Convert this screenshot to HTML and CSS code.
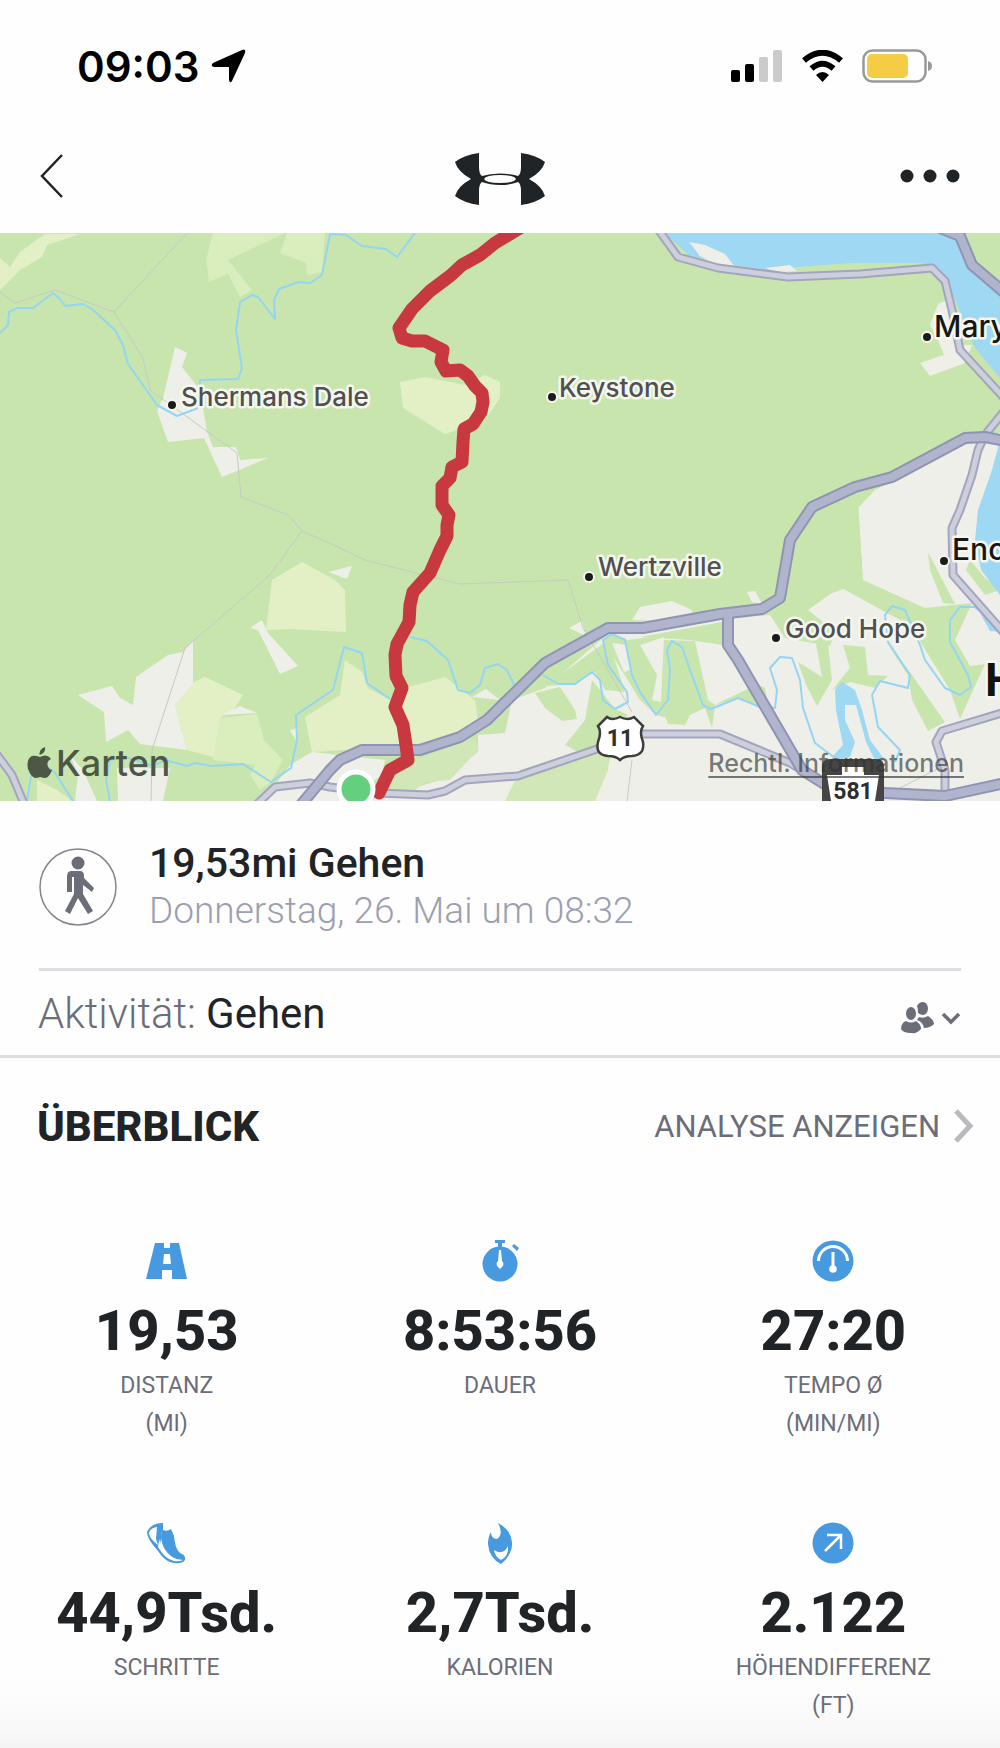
FILE: index.html
```html
<!DOCTYPE html>
<html lang="de">
<head>
  <meta charset="UTF-8" />
  <meta name="viewport" content="width=device-width, initial-scale=1.0" />
  <title>19,53mi Gehen</title>
  <link rel="stylesheet" href="styles.css">
</head>
<body>
  <div class="status-bar">
    <div class="status-left">
      <span class="time">09:03</span>
      <svg width="36" height="34" viewBox="0 0 36 34" fill="#000"><path d="M31 1Q35 -1 34 4L21 32Q19 35 18 31V18H3Q-1 17 2 14Z"/></svg>
    </div>
    <div class="status-right">
      <svg width="52" height="34" viewBox="0 0 52 34"><rect y="21" width="9" height="12" rx="2"/><rect x="14" y="15" width="9" height="18" rx="2"/><rect x="28" y="8" width="9" height="25" rx="2" fill="#cbcbcb"/><rect x="42" y="1" width="9" height="32" rx="2" fill="#cbcbcb"/></svg>
      <svg width="43" height="32" viewBox="0 0 43 32"><path d="M3 10.500Q21.500-5 40 10.500M10.500 18.500Q21.500 9 32.500 18.500" fill="none" stroke="#000" stroke-width="6"/><path d="M15 25Q21.500 19 28 25L21.500 32Z"/></svg>
      <svg width="70" height="34" viewBox="0 0 70 34"><rect x="1.500" y="1.500" width="62" height="31" rx="9" fill="none" stroke="#999" stroke-width="2.500"/><rect x="5" y="5" width="41" height="24" rx="5" fill="#f5cc45"/><path d="M66 12Q70 13 70 17T66 22Z" fill="#999"/></svg>
    </div>
  </div>

  <header class="nav">
    <button class="icon-button" aria-label="Zurück">
      <svg width="24" height="44" viewBox="0 0 24 44" fill="none" stroke="#202427" stroke-width="2.500"><path d="M22 1L2 22L22 43"/></svg>
    </button>
    <svg class="logo" width="92" height="52" viewBox="0 0 92 52" fill="#202427">
      <path id="ua-half" d="M25 0Q10 2 1 9Q4 19 17 26Q4 33 1 43Q10 50 25 52V38Q25 31 28 29Q36 32 46 32V30Q32 30 30 26Q32 22 46 22V20.500Q36 20.500 28 23Q25 21 25 14Z"/>
      <use href="#ua-half" transform="translate(92 0) scale(-1 1)"/>
    </svg>
    <button class="icon-button" aria-label="Mehr">
      <svg width="60" height="14" viewBox="0 0 60 14" fill="#202427"><circle cx="7" cy="7" r="6.500"/><circle cx="30" cy="7" r="6.500"/><circle cx="53" cy="7" r="6.500"/></svg>
    </button>
  </header>

  <section class="map">
    <svg class="map-canvas" viewBox="0 233 1000 568" preserveAspectRatio="xMidYMid slice">
      <rect y="233" width="1000" height="568" fill="#c8e5ae"/>

      <!-- fields -->
      <g fill="#e3f0c6">
        <path d="M0 258L10 267L20 252L45 234H80L47 245L42 257L20 270L0 290Z"/>
        <path d="M400 382L425 377L465 385L485 375L500 382V398L485 420L445 434L403 408Z"/>
        <path d="M302 562L272 580L266 630L290 629L346 632L345 590L335 580Z"/>
        <path d="M205 677L243 695L235 708L220 718L225 740L213 757L187 750L175 705L192 683Z"/>
        <path d="M37 780L57 790L72 801H37Z"/>
        <path d="M305 717L340 695L345 660L362 672L368 688L390 700L405 688L445 677L475 700L478 720L455 740L375 748L312 752Z"/>
      </g>
      <g fill="#d9edbd">
        <path d="M213 233H285L228 260L252 290L240 297L228 274L209 282L206 260Z"/>
        <path d="M287 233H325L322 272L307 275L306 263L280 253Z"/>
        <path d="M220 718L257 714L264 740L283 760L271 782L260 790L250 775L255 765L213 760Z"/>
      </g>

      <!-- towns -->
      <g fill="#efefea">
        <path d="M175 347L187 353L182 367L200 390L207 432L213 447H236L240 460L268 458L222 477L204 438L168 442L157 411L163 398Z"/>
        <path d="M78 695L112 686L120 698L133 705L136 677L168 655L183 652L193 641V683L175 705L187 750L140 744L128 730L106 742L104 712Z"/>
        <path d="M250 628L262 620L268 633L298 666L280 674L258 630Z"/>
        <path d="M328 572L352 566L347 579Z"/>
        <path d="M222 715L240 706L257 713Z"/>
        <path d="M70 755L83 770L97 801H75L78 775Z"/>
        <path d="M117 768H170L163 801H118Z"/>
        <path d="M290 730L298 728L297 742Z"/>
        <path d="M275 785L290 765L312 752L385 760L382 775L345 801H260Z"/>
        <path d="M569 628L582 621L586 636Z"/>
        <path d="M632 620L640 607L672 601L692 610V622Z"/>
        <path d="M747 592L755 591L762 604L752 602Z"/>
        <path d="M472 697L486 689L500 700Z"/>
        <path d="M478 752V735L505 733L512 700L545 688L608 634L643 633L720 620L770 615L863 582L858 508L875 490L935 460L965 443L1000 433V801H320L382 798L440 780Z"/>
        <path d="M938 304L948 300L955 310L960 345L972 345L965 363L930 376L920 363L944 355L938 340L930 325Z"/>
      </g>

      <!-- woods inside the towns -->
      <g fill="#c8e5ae">
        <path d="M780 600L800 500L858 500L863 580L925 608L972 603L955 640L970 666L985 664L960 719L950 690L910 625L885 612L840 587L808 610L835 632L830 646L785 638L770 615Z"/>
        <path d="M928 552L955 604L943 603L930 570Z"/>
        <path d="M798 662L822 677L816 644L828 644L832 680L817 706L806 685Z"/>
        <path d="M843 645L865 647L868 675L888 676L875 688L850 682L832 690L850 668Z"/>
        <path d="M886 642L912 675L945 722L928 731L912 700L908 675Z"/>
        <path d="M662 640L695 641L708 700L715 705L712 728L705 708L690 715L685 725L668 724L660 700Z"/>
        <path d="M640 637L722 622V645L690 640Z"/>
        <path d="M712 706L752 687L760 708L738 698Z"/>
        <path d="M748 680L765 688L768 706Z"/>
        <path d="M535 693L560 687L575 710L577 719L562 721L545 708Z"/>
        <path d="M592 680L600 690L615 709L628 715L615 730L608 768L565 745L585 720Z"/>
        <path d="M603 640L613 634L628 640L660 636L664 640L661 700L675 720L656 715L640 700Z"/>
        <path d="M545 686L608 640L625 692L605 690L595 672L575 684Z"/>
        <path d="M970 560L985 578L1000 590L985 595L966 570Z"/>
      </g>
      <g fill="#efefea">
        <path d="M612 643L627 645L630 670L624 672Z"/>
        <path d="M640 645L664 637L661 702L652 700L657 675Z"/>
      </g>
      <g fill="#d1e7b8">
        <path d="M382 772L473 738L479 749L450 780L425 782L415 790L390 797Z"/>
        <path d="M505 801L520 770H608L595 801Z"/>
        <path d="M520 770L560 757L608 745V770Z"/>
      </g>

      <!-- water -->
      <g fill="#9fd8f2">
        <path d="M664 233L690 256L760 270L850 263L920 263L935 266L945 277L955 300L965 325L975 348L1000 378V290L972 267L958 240L945 233Z"/>
        <path d="M1000 440L992 470L978 510L975 540L981 570L1000 595Z"/>
        <path d="M980 613L992 617L1000 632L990 631Z"/>
        <path d="M835 690L842 682L855 690L862 710L870 740L885 760H875L866 742L856 705L845 705V720L855 742L850 757L838 760L832 757L843 745L836 710Z"/>
      </g>
      <path d="M689 242L705 245L725 254L735 267L715 264L700 256Z" fill="#efefea"/>
      <path d="M765 268L790 265L797 271L780 272Z" fill="#efefea"/>

      <!-- streams -->
      <g class="stream">
        <path d="M0 333L8 325L9 312L17 308H33L53 293L60 299L65 306L83 304L92 309L115 330L123 345L128 364L157 405L177 416L198 408"/>
        <path d="M200 390V380L238 379L242 368L236 330L240 302L252 295L258 297L275 319L274 300L279 289L299 282L310 283L322 275L330 234L346 235L362 246L386 249L397 257L415 233"/>
        <path d="M27 801L32 770L45 765L55 773L73 801M110 801L106 780L110 760L125 757L153 766L165 760L187 766L195 763L212 766L243 764L271 782L291 768L297 740L296 715L333 690L344 647L362 653L367 683L390 699"/>
        <path d="M410 637L427 641L448 660L458 690L470 693L480 685L485 668L498 664L507 670L515 687M543 675L558 684H575L592 672L600 680L603 700L615 709L628 702L627 692L608 665L603 640L612 634L625 640L632 675L640 692L656 715L668 700L670 670L667 650L672 641L682 647L690 670L703 705L711 709L738 698L760 707L775 708L777 690L770 668L780 657L792 658L800 680L803 708L815 743L835 758"/>
        <path d="M895 762L900 750L878 727L872 695L880 681L908 688L910 675L888 642L885 615L892 606L905 610L920 645L925 660L945 688L960 695L971 687L968 675L950 642V620L960 607H975L990 620"/>
      </g>

      <!-- small roads -->
      <g class="lane">
        <path d="M0 292L15 303L55 290L114 312L187 233M114 312L143 358L150 390L237 453L241 497L288 515L302 531L270 575L185 648L152 750L151 801"/>
        <path d="M302 531L340 548L365 560L460 584L568 580L583 628L605 665L632 712M632 760L627 801M900 788L945 765"/>
      </g>

      <!-- roads -->
      <g class="road">
        <g id="roads">
          <path d="M655 225L678 257L718 268L788 277L860 274L932 268L945 281L952 310L960 350L1005 399"/>
          <path d="M1005 410L985 435L978 450L972 475L960 510L952 528L953 575L1005 634"/>
          <path d="M255 806L275 787L310 783L330 787L378 793L428 795L445 791L465 780L518 776L600 748L640 734H720L790 763L805 772M-5 752L12 775L25 806"/>
          <path d="M1005 712L942 731L936 742L945 770V796"/>
        </g>
      </g>
      <use href="#roads" class="road-fill"/>
      <g class="highway">
        <g id="highways">
          <path d="M940 228L960 236L972 265L1005 293"/>
          <path d="M300 806L330 770L340 760L362 750H420L460 737L487 720L545 663L608 628H643L720 614L762 609L780 598L790 540L812 507L855 487L892 477L965 438L985 437L1005 441"/>
          <path d="M728 614V645L738 660L802 770L826 785L885 793L945 796L1005 783"/>
        </g>
      </g>
      <use href="#highways" class="highway-fill"/>

      <!-- walked route -->
      <path class="route" d="M520 228L495 243L480 255L462 265L450 276L430 291L412 309L399 328L402 338L412 341H425L443 350L441 362L446 371L460 370L468 376L475 386L482 393L483 402L481 412L473 424L464 429L463 442L462 462L452 467L450 478L442 486V505L449 515L447 525V536L440 550L430 573L413 592L410 605L409 622L397 644L395 655L396 676L402 688L395 707L403 725L406 745L408 760L390 770L379 793"/>
      <circle cx="356" cy="789" r="19.500" fill="#fff"/>
      <circle cx="356" cy="789" r="14.500" fill="#64cf7c"/>

      <!-- road shields -->
      <path d="M607 717Q612 721 620 717Q628 721 634 717L643 726Q639 732 643 742Q645 755 632 756Q624 756 620 760Q616 756 608 756Q595 755 598 742Q602 732 598 726Z" fill="#fff" stroke="#3d3d3d" stroke-width="2.500"/>
      <text class="shield" x="620" y="746">11</text>
      <path d="M822 801V767Q822 759 830 759H876Q884 759 884 767V801Z" fill="#454545"/>
      <path d="M827 775H842V767H864V775H879L875 801H831Z" fill="#fff"/>
      <text class="shield" x="853" y="799">581</text>

      <!-- places -->
      <g fill="#1b1b1b" stroke="#f5f7ee" stroke-width="2">
        <circle cx="172" cy="405" r="5"/><circle cx="552" cy="397" r="5"/><circle cx="927" cy="337" r="5"/><circle cx="589" cy="577" r="5"/><circle cx="776" cy="638" r="5"/><circle cx="944" cy="561" r="5"/>
      </g>
      <g class="place">
        <text x="181" y="406">Shermans Dale</text>
        <text x="559" y="397">Keystone</text>
        <text x="598" y="576">Wertzville</text>
        <text x="785" y="638">Good Hope</text>
        <text class="town" x="934" y="337">Marysville</text>
        <text class="town" x="952" y="560">Enola</text>
        <text class="city" x="985" y="696">Harrisburg</text>
      </g>
    </svg>
    <div class="map-footer">
      <span class="map-brand">
        <svg width="26" height="32" viewBox="0 0 26 32" fill="#4c5745"><path d="M18 0Q19 6 12.500 8Q12 2 18 0ZM13 10Q20 6 24 12Q20 14 20.500 18Q21 22 25 23Q22 31 18 31Q16 31 13.500 30Q10 31 8 31Q4 30 1 22Q-1 12 5 9Q8 8 13 10Z"/></svg>
        Karten
      </span>
      <a class="legal" href="#">Rechtl. Informationen</a>
    </div>
  </section>

  <main>
    <section class="summary">
      <svg class="walk" width="78" height="78" viewBox="0 0 78 78" fill="#6b6d78">
        <circle cx="39" cy="39" r="38" fill="none" stroke="#85868d" stroke-width="1.500"/>
        <circle cx="39" cy="15" r="6.500"/>
        <path d="M32 23H41Q45 23 45 28V30L55 40L53 44L44 37V46L54 63L49 66L39 50L31 66L26 63L35 46V29H33V44H28V29Q28 23 32 23Z"/>
      </svg>
      <div>
        <h1>19,53mi Gehen</h1>
        <p class="date">Donnerstag, 26. Mai um 08:32</p>
      </div>
    </section>

    <section class="activity">
      <p>Aktivität: <span>Gehen</span></p>
      <button class="icon-button" aria-label="Sichtbarkeit">
        <svg width="60" height="32" viewBox="0 0 60 32" fill="#6b6d78"><path d="M11 5a5 6.500 0 0 1 0 13a5 6.500 0 0 1 0-13ZM23 0a5 6.500 0 0 1 0 13Q21 13 18 11Q18 6 17 4Q19 0 23 0ZM6 19Q11 22 16 19Q21 22 21 27Q17 32 11 31Q3 31 1 27Q1 21 6 19ZM19 15Q23 17 28 14Q34 18 34 22Q30 26 24 26Q23 20 17 18Z"/><path d="M43 12L51 20L59 12" fill="none" stroke="#6b6d78" stroke-width="3.500"/></svg>
      </button>
    </section>

    <section class="overview">
      <div class="overview-head">
        <h2>ÜBERBLICK</h2>
        <a href="#">ANALYSE ANZEIGEN
          <svg width="20" height="34" viewBox="0 0 20 34" fill="none" stroke="#b9babd" stroke-width="5"><path d="M2 2L16 17L2 32"/></svg>
        </a>
      </div>

      <div class="stats">
        <div class="stat">
          <svg width="42" height="42" viewBox="0 0 42 42"><path fill-rule="evenodd" d="M9 3H18V8H24V3H33L41 39H26V30H16V39H0ZM18 14L17 24H25L24 14Z"/></svg>
          <strong>19,53</strong>
          <span>DISTANZ<br>(MI)</span>
        </div>
        <div class="stat">
          <svg width="42" height="42" viewBox="0 0 42 42"><path d="M16 0H26V3H23V8H19V3H16ZM33 6L35 4L40 8L38 11Z"/><circle cx="21" cy="24" r="17.500"/><path d="M20 10H22L23 21Q26 24 23 27L21 29L19 27Q16 24 19 21Z" fill="#fff"/></svg>
          <strong>8:53:56</strong>
          <span>DAUER</span>
        </div>
        <div class="stat">
          <svg width="42" height="42" viewBox="0 0 42 42"><circle cx="21" cy="21" r="20.500"/><path d="M6.500 21A14.500 14.500 0 0 1 35.500 21M21 12V30" fill="none" stroke="#fff" stroke-width="3"/><circle cx="21" cy="29" r="3.800" fill="#fff"/></svg>
          <strong>27:20</strong>
          <span>TEMPO Ø<br>(MIN/MI)</span>
        </div>
        <div class="stat">
          <svg width="42" height="42" viewBox="0 0 42 42"><path d="M1 10Q5 1 17 1V8Q21 10 25 7L28 14Q29 27 34 31Q40 33 39 38Q36 42 28 41Q19 40 12 29Q1 17 1 10Z"/><path d="M3 11Q4 6 11 5L10 17L12 23Q3 16 3 11ZM14 17L15 22L16 7Q14 18 18 26Q25 38 37 38Q33 40 28 39Q19 37 12 25Q12 21 14 17Z" fill="#fff"/></svg>
          <strong>44,9Tsd.</strong>
          <span>SCHRITTE</span>
        </div>
        <div class="stat">
          <svg width="42" height="42" viewBox="0 0 42 42"><path d="M19 1Q32 8 33 20Q34 32 22 42Q10 36 9 22Q9 15 12 10Q12 17 18 17Q25 12 19 1Z"/><path d="M15 28Q24 34 29 24Q30 34 22 38Q16 35 15 28Z" fill="#fff"/></svg>
          <strong>2,7Tsd.</strong>
          <span>KALORIEN</span>
        </div>
        <div class="stat">
          <svg width="42" height="42" viewBox="0 0 42 42"><circle cx="21" cy="21" r="20.500"/><path d="M13 29L28 14M15 13H29V27" fill="none" stroke="#fff" stroke-width="2.500"/></svg>
          <strong>2.122</strong>
          <span>HÖHENDIFFERENZ<br>(FT)</span>
        </div>
      </div>
    </section>
  </main>
</body>
</html>
```
FILE: styles.css
```css
* {
  box-sizing: border-box;
}
body {
  margin: 0;
  background: #fefefe;
  color: #202427;
  font-family: Roboto, "Liberation Sans", sans-serif;
}
h1, h2, p {
  margin: 0;
}
svg {
  display: block;
  flex: none;
}
.icon-button {
  padding: 0;
  border: none;
  background: none;
  cursor: pointer;
}

.status-bar {
  display: flex;
  justify-content: space-between;
  align-items: center;
  height: 132px;
  padding: 0 68px 0 77px;
}
.status-left {
  display: flex;
  align-items: center;
  gap: 12px;
}
.status-right {
  display: flex;
  align-items: center;
  gap: 18px;
}
.time {
  color: #000;
  font-family: Inter, sans-serif;
  font-size: 42px;
  font-weight: 600;
}
.nav {
  display: grid;
  grid-template-columns: 1fr auto 1fr;
  align-items: center;
  height: 101px;
  padding: 0 40px 13px;
}
.nav .icon-button:last-child {
  justify-self: end;
}
.nav .icon-button:first-child {
  justify-self: start;
}
.logo {
  margin-top: 6px;
}

.map {
  position: relative;
  height: 568px;
  font-family: Inter, sans-serif;
}
.map-canvas {
  width: 100%;
  height: 100%;
}
.stream, .lane, .road, .road-fill, .highway, .highway-fill, .route {
  fill: none;
  stroke-linejoin: round;
}
.stream {
  stroke: #93d5f3;
  stroke-width: 2px;
}
.lane {
  stroke: #c6cbc4;
  stroke-width: 1px;
}
.road {
  stroke: #a3a5bf;
  stroke-width: 9px;
}
.road-fill {
  stroke: #cdcfdc;
  stroke-width: 5px;
}
.highway {
  stroke: #8f94b2;
  stroke-width: 12px;
}
.highway-fill {
  stroke: #b0b4cc;
  stroke-width: 8px;
}
.route {
  stroke: #c7393e;
  stroke-width: 13px;
  stroke-linecap: round;
}
.shield {
  fill: #2e2e2e;
  font-family: Roboto, sans-serif;
  font-size: 23px;
  font-weight: 700;
  text-anchor: middle;
}
.place {
  fill: #505050;
  font-size: 26px;
  font-weight: 500;
  stroke: #f5f7ee;
  stroke-width: 5px;
  stroke-linejoin: round;
  paint-order: stroke;
}
.town {
  fill: #161616;
  font-size: 30px;
}
.city {
  fill: #111;
  font-size: 45px;
  font-weight: 700;
}
.map-footer {
  position: absolute;
  right: 36px;
  bottom: 16px;
  left: 27px;
  display: flex;
  justify-content: space-between;
  align-items: center;
}
.map-brand {
  display: flex;
  align-items: center;
  gap: 3px;
  color: #4c5745;
  font-size: 36px;
  font-weight: 500;
}
.legal {
  color: rgba(50, 50, 50, 0.65);
  font-size: 25px;
  font-weight: 500;
  text-decoration-thickness: 2px;
  text-underline-offset: 4px;
}

.summary {
  display: flex;
  align-items: center;
  gap: 32px;
  height: 170px;
  margin: 0 39px;
  padding-top: 5px;
  border-bottom: 3px solid #dddee4;
}
h1 {
  font-size: 41px;
  font-weight: 500;
  line-height: 48px;
}
.date {
  color: #9c9fb0;
  font-size: 37px;
  font-weight: 300;
  line-height: 48px;
}
.activity {
  display: flex;
  justify-content: space-between;
  align-items: center;
  height: 87px;
  padding: 0 40px 0 38px;
  border-bottom: 3px solid #dddee4;
  color: #6b6d78;
  font-size: 42px;
  font-weight: 300;
}
.activity span {
  color: #202427;
  font-weight: 400;
}
.activity .icon-button {
  margin-top: 10px;
}
.overview {
  padding-bottom: 14px;
  background: linear-gradient(to top, #e9e9e9, #f8f8f8 45px, #fefefe 100px);
}
.overview-head {
  display: flex;
  justify-content: space-between;
  align-items: center;
  height: 136px;
  padding: 0 26px 0 37px;
}
h2 {
  font-size: 42px;
  font-weight: 800;
}
.overview-head a {
  display: flex;
  align-items: center;
  gap: 14px;
  color: #6b6d78;
  font-size: 31px;
  text-decoration: none;
}
.stats {
  display: grid;
  grid-template-columns: repeat(3, 1fr);
  row-gap: 40px;
  padding-top: 46px;
}
.stat {
  display: flex;
  flex-direction: column;
  align-items: center;
  min-height: 242px;
  text-align: center;
}
.stat svg {
  fill: #4799e0;
}
.stat strong {
  margin-top: 17px;
  font-size: 56px;
  font-weight: 800;
  line-height: 64px;
}
.stat span {
  margin-top: 4px;
  color: #6b6d78;
  font-size: 23px;
  line-height: 38px;
}
```
